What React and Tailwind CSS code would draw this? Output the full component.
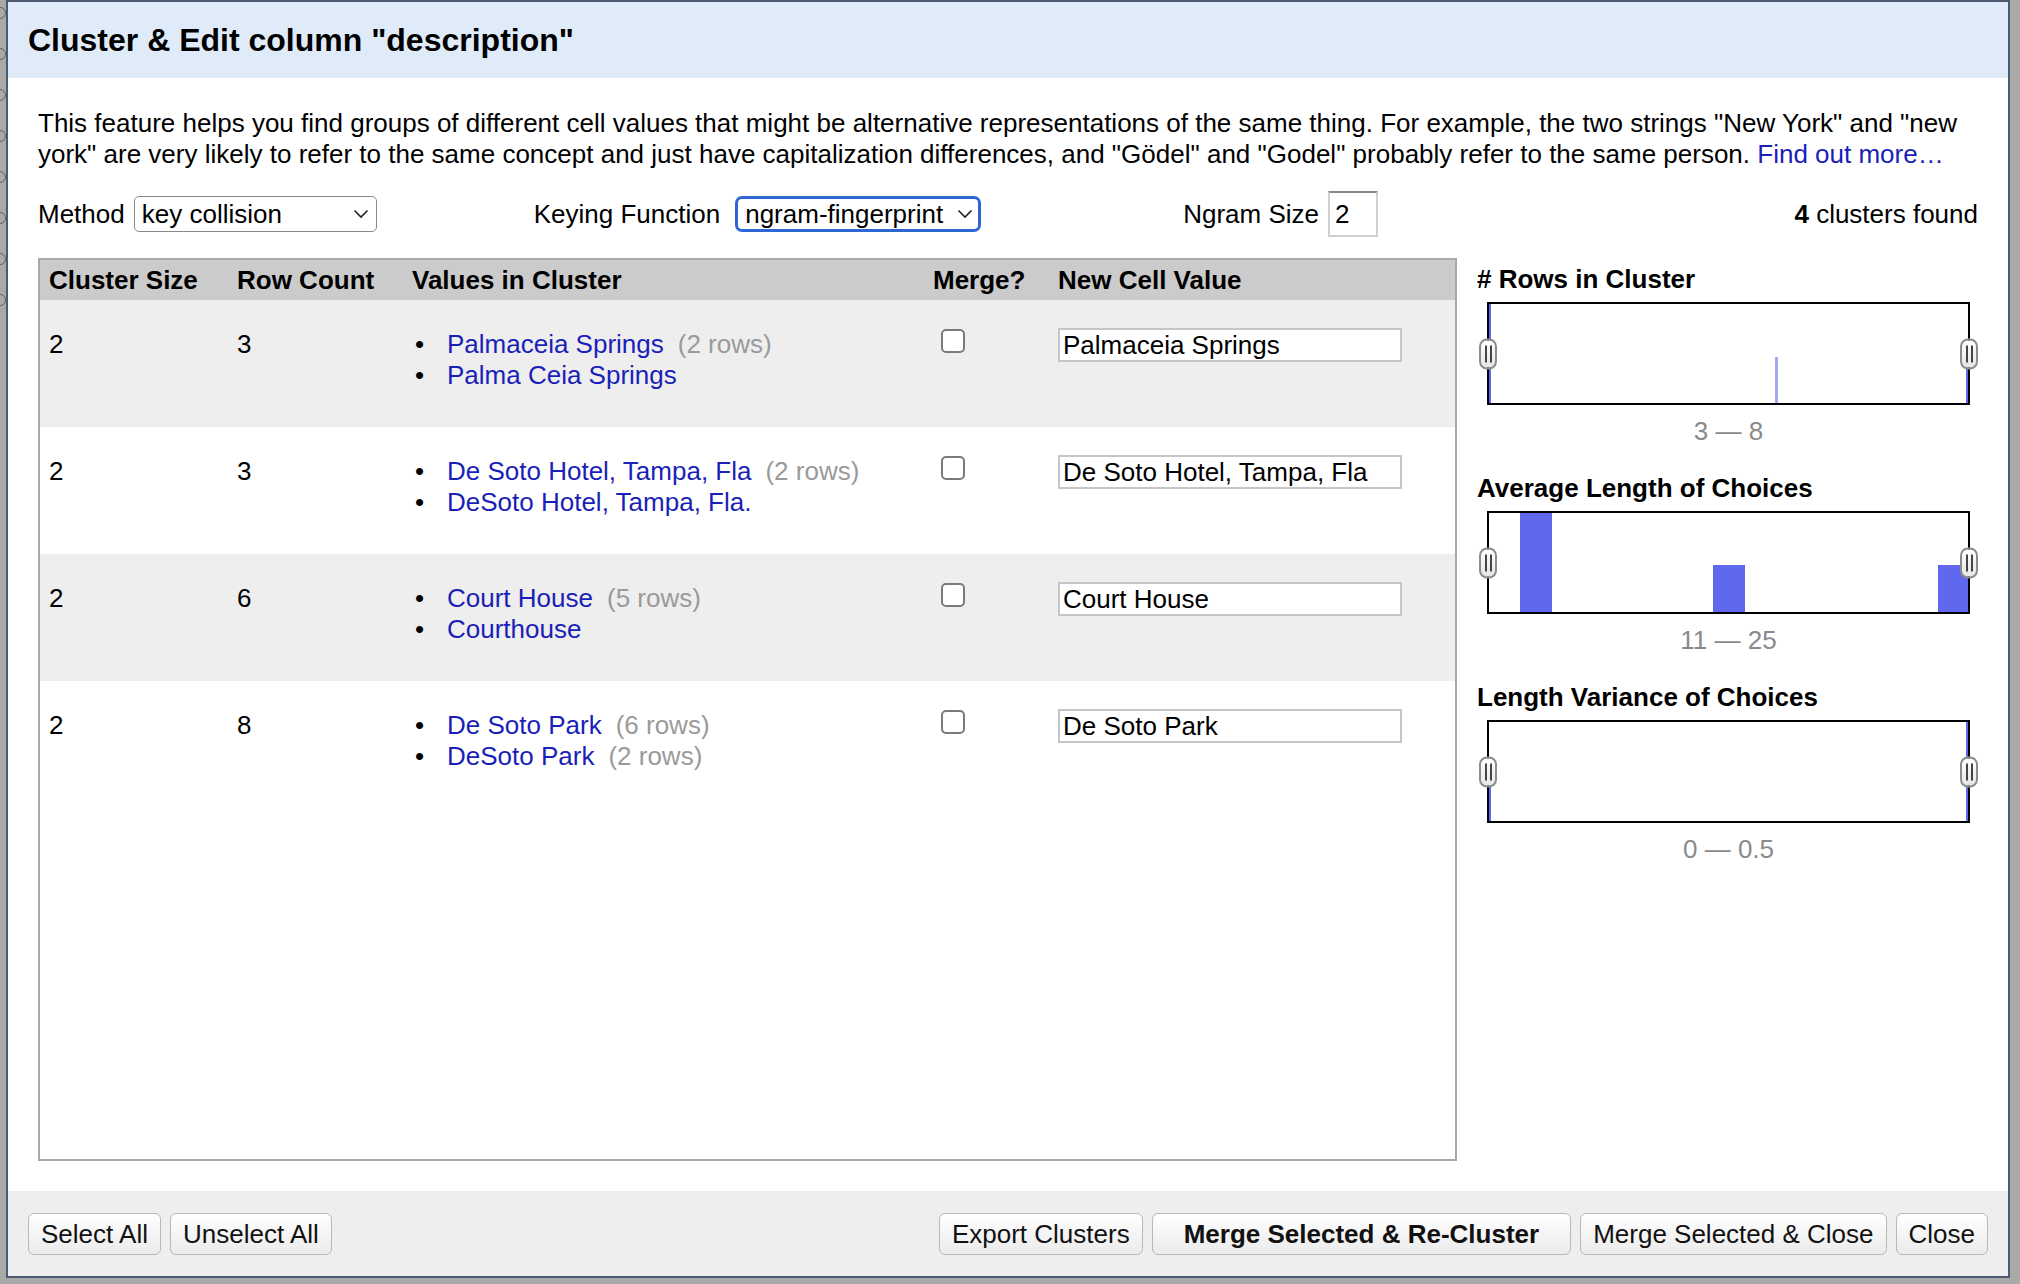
import React from 'react'

const rows = [
    { size: 2, count: 3, values: [['Palmaceia Springs', '(2 rows)'], ['Palma Ceia Springs', null]], value: 'Palmaceia Springs', shaded: true },
    { size: 2, count: 3, values: [['De Soto Hotel, Tampa, Fla', '(2 rows)'], ['DeSoto Hotel, Tampa, Fla.', null]], value: 'De Soto Hotel, Tampa, Fla', shaded: false },
    { size: 2, count: 6, values: [['Court House', '(5 rows)'], ['Courthouse', null]], value: 'Court House', shaded: true },
    { size: 2, count: 8, values: [['De Soto Park', '(6 rows)'], ['DeSoto Park', '(2 rows)']], value: 'De Soto Park', shaded: false },
]

function Chevron() {
    return (
        <svg width="16" height="10" viewBox="0 0 16 10" className="shrink-0">
            <path d="M1.5 1.5 L8 8 L14.5 1.5" fill="none" stroke="#222" strokeWidth="1.6" />
        </svg>
    )
}

function Handle({ side }) {
    return (
        <div className={`absolute top-1/2 -translate-y-1/2 w-[18px] h-[31px] rounded-[8px] border-2 border-[#8c8c8c] bg-gradient-to-b from-white to-[#e6e6e6] flex items-center justify-center gap-[3px] ${side === 'left' ? '-left-[10px]' : '-right-[10px]'}`}>
            <div className="w-[2px] h-[17px] bg-[#444]" />
            <div className="w-[2px] h-[17px] bg-[#444]" />
        </div>
    )
}

function Histogram({ title, range, children, first }) {
    return (
        <div className={first ? '' : 'mt-[26px]'}>
            <div className="font-bold leading-[31px] text-black">{title}</div>
            <div className="relative mt-[7px] ml-[10px] w-[483px] h-[103px] border-2 border-black bg-white">
                <svg width="479" height="99" viewBox="0 0 479 99" className="block">
                    {children}
                </svg>
                <Handle side="left" />
                <Handle side="right" />
            </div>
            <div className="mt-[11px] ml-[10px] w-[483px] text-center leading-[31px] text-[#8a8a8a]">{range}</div>
        </div>
    )
}

function Button({ children, bold, wide }) {
    return (
        <button className={`h-[42px] rounded-[6px] border-[1.5px] border-[#b8b8b8] bg-gradient-to-b from-white to-[#ebebeb] text-[#111] leading-none ${wide ? 'px-[31px]' : 'px-[12px]'} ${bold ? 'font-bold' : ''}`}>
            {children}
        </button>
    )
}

export default function App() {
    return (
        <div className="w-[2020px] h-[1284px] bg-[#a9a9a9] flex overflow-hidden text-[26px]" style={{ fontFamily: '"Liberation Sans", Arial, sans-serif' }}>
            {/* background peeking out on the left */}
            <div className="w-[6px] shrink-0 overflow-hidden flex flex-col gap-[29px] pt-[7px]">
                {Array.from({ length: 8 }).map((_, i) => (
                    <div key={i} className="w-[12px] h-[12px] rounded-full border border-[#606060] -ml-[6px] shrink-0" />
                ))}
            </div>

            <div className="w-[2004px] h-[1278px] shrink-0 border-2 border-[#4a5b72] bg-white flex flex-col">
                {/* Header */}
                <div className="h-[76px] bg-[#e0ebf9] flex items-center pl-[20px]">
                    <h1 className="text-[32px] font-bold text-black">Cluster &amp; Edit column "description"</h1>
                </div>

                {/* Body */}
                <div className="h-[1113px] px-[30px] pt-[30px] flex flex-col text-black">
                    <p className="leading-[31px]">
                        <span className="whitespace-nowrap">This feature helps you find groups of different cell values that might be alternative representations of the same thing. For example, the two strings "New York" and "new</span>
                        <br />
                        <span className="whitespace-nowrap">york" are very likely to refer to the same concept and just have capitalization differences, and "Gödel" and "Godel" probably refer to the same person. <span className="text-[#1a1fb8]">Find out more…</span></span>
                    </p>

                    <div className="mt-[21px] h-[46px] flex items-center">
                        <span>Method</span>
                        <div className="ml-[9px] w-[243px] h-[36px] border-[1.5px] border-[#8a8a8a] rounded-[5px] bg-white flex items-center justify-between pl-[7px] pr-[7px]">
                            <span className="leading-none">key collision</span>
                            <Chevron />
                        </div>
                        <span className="ml-[157px]">Keying Function</span>
                        <div className="ml-[15px] w-[246px] h-[36px] border-[3px] border-[#2d68d2] rounded-[7px] bg-white flex items-center justify-between pl-[7px] pr-[5px]">
                            <span className="leading-none">ngram-fingerprint</span>
                            <Chevron />
                        </div>
                        <span className="ml-[202px]">Ngram Size</span>
                        <div className="ml-[9px] w-[50px] h-[46px] border-2 border-[#d0d0d0] border-t-[#8a8a8a] bg-white flex items-center pl-[5px]">2</div>
                        <span className="ml-auto"><b>4</b> clusters found</span>
                    </div>

                    <div className="mt-[21px] h-[903px] flex">
                        {/* Cluster table */}
                        <div className="w-[1419px] shrink-0 h-full border-2 border-[#a8a8a8] bg-white flex flex-col">
                            <div className="h-[40px] bg-[#cbcbcb] grid grid-cols-[188px_175px_521px_125px_1fr] items-center font-bold">
                                <div className="pl-[9px]">Cluster Size</div>
                                <div className="pl-[9px]">Row Count</div>
                                <div className="pl-[9px]">Values in Cluster</div>
                                <div className="pl-[9px]">Merge?</div>
                                <div className="pl-[9px]">New Cell Value</div>
                            </div>
                            {rows.map((r, i) => (
                                <div key={i} className={`h-[127px] shrink-0 grid grid-cols-[188px_175px_521px_125px_1fr] leading-[31px] ${r.shaded ? 'bg-[#eeeeee]' : 'bg-white'}`}>
                                    <div className="pl-[9px] pt-[29px]">{r.size}</div>
                                    <div className="pl-[9px] pt-[29px]">{r.count}</div>
                                    <div className="pl-[9px] pt-[29px]">
                                        {r.values.map(([v, n], j) => (
                                            <div key={j} className="flex whitespace-nowrap">
                                                <span className="w-[35px] pl-[3px]">•</span>
                                                <span className="text-[#1a1fb8]">{v}</span>
                                                {n && <span className="ml-[14px] text-[#9a9a9a]">{n}</span>}
                                            </div>
                                        ))}
                                    </div>
                                    <div className="pl-[17px] pt-[29px]">
                                        <div className="w-[24px] h-[24px] border-2 border-[#7a7a7a] rounded-[5px] bg-white" />
                                    </div>
                                    <div className="pl-[9px] pt-[28px]">
                                        <div className="w-[344px] h-[34px] border-2 border-[#c6c6c6] bg-white flex items-center pl-[3px] leading-none">{r.value}</div>
                                    </div>
                                </div>
                            ))}
                        </div>

                        {/* Facet histograms */}
                        <div className="ml-[20px] flex-1 pt-[6px]">
                            <Histogram title="# Rows in Cluster" range="3 — 8" first>
                                <rect x="0" y="0" width="2" height="99" fill="#6068f0" />
                                <rect x="286" y="53" width="3" height="46" fill="#a3a8f4" />
                                <rect x="477" y="53" width="2" height="46" fill="#6068f0" />
                            </Histogram>
                            <Histogram title="Average Length of Choices" range="11 — 25">
                                <rect x="31" y="0" width="32" height="99" fill="#6068f0" />
                                <rect x="224" y="52" width="32" height="47" fill="#6068f0" />
                                <rect x="449" y="52" width="30" height="47" fill="#6068f0" />
                            </Histogram>
                            <Histogram title="Length Variance of Choices" range="0 — 0.5">
                                <rect x="0" y="61" width="2" height="38" fill="#6068f0" />
                                <rect x="477" y="0" width="2" height="99" fill="#6068f0" />
                            </Histogram>
                        </div>
                    </div>
                </div>

                {/* Footer */}
                <div className="h-[85px] bg-[#eeeeee] flex items-center px-[20px]">
                    <div className="flex gap-[9px]">
                        <Button>Select All</Button>
                        <Button>Unselect All</Button>
                    </div>
                    <div className="ml-auto flex gap-[9px]">
                        <Button>Export Clusters</Button>
                        <Button bold wide>Merge Selected &amp; Re-Cluster</Button>
                        <Button>Merge Selected &amp; Close</Button>
                        <Button>Close</Button>
                    </div>
                </div>
            </div>
        </div>
    )
}
